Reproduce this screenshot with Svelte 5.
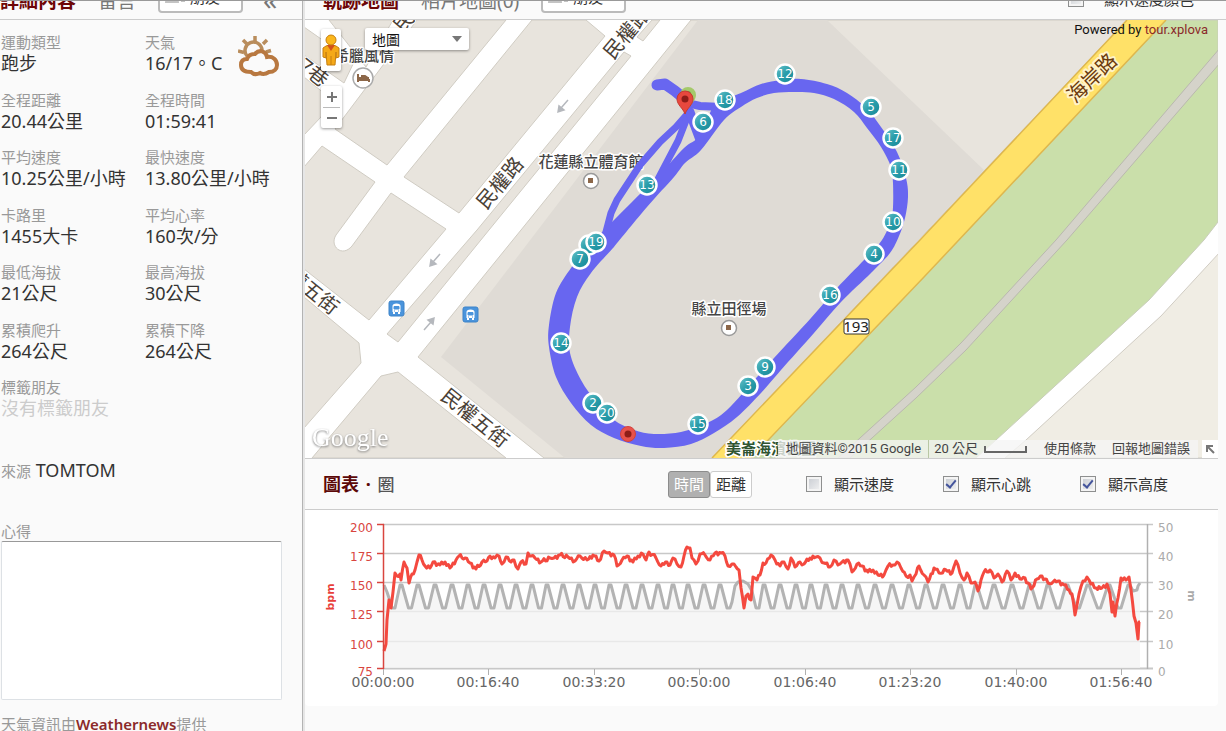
<script>
  const stats = [
    ['運動類型', '跑步'], ['天氣', '16/17。C'],
    ['全程距離', '20.44公里'], ['全程時間', '01:59:41'],
    ['平均速度', '10.25公里/小時'], ['最快速度', '13.80公里/小時'],
    ['卡路里', '1455大卡'], ['平均心率', '160次/分'],
    ['最低海拔', '21公尺'], ['最高海拔', '30公尺'],
    ['累積爬升', '264公尺'], ['累積下降', '264公尺'],
    ['標籤朋友', '沒有標籤朋友']
  ];

  const markers = [
    ['', 589, 245], ['12', 785, 74], ['5', 871, 107], ['17', 893, 138], ['11', 899, 170],
    ['10', 893, 222], ['4', 874, 254], ['16', 830, 295], ['9', 765, 367], ['3', 748, 386],
    ['15', 698, 424], ['2', 593, 403], ['20', 607, 413], ['14', 561, 343], ['19', 596, 242],
    ['7', 580, 259], ['13', 647, 185], ['6', 703, 122], ['18', 725, 100]
  ];

  const blocks = [
    '329,20 393,20 366,67',
    '304,27 354,62 344,83 304,55',
    '304,77 330,98 321,117 304,135',
    '417,20 506,20 387,165 335,129',
    '532,20 586,20 605,36 459,213 404,177',
    '304,297 359,343 361,363 304,428',
    '381,376 398,372 506,458 312,458',
    '387,334 477,230 624,52 631,56 489,230 398,342',
    '637,37 652,20 660,20 643,41',
    '691,20 1127,20 712,458 544,458 418,357 521,230'
  ];

  // Catmull-Rom spline through the given points, as a closed path.
  function smooth(text) {
    const p = text.split(' ').map((s) => s.split(',').map(Number));
    const at = (i) => p[Math.max(0, Math.min(p.length - 1, i))];
    let d = `M${p[0]}`;
    for (let i = 0; i < p.length - 1; i++) {
      const [a, b, c, e] = [at(i - 1), at(i), at(i + 1), at(i + 2)];
      d += `C${b[0] + (c[0] - a[0]) / 6},${b[1] + (c[1] - a[1]) / 6} ${c[0] - (e[0] - b[0]) / 6},${c[1] - (e[1] - b[1]) / 6} ${c}`;
    }
    return d + 'z';
  }
  const outer = smooth('714,103 741,93 761,84 781,80 801,79 827,84 847,93 866,108 881,127 897,152 906,178 908,197 905,218 899,236 890,253 871,273 841,302 814,333 781,370 761,393 737,417 714,433 691,444 664,448 641,446 614,438 591,425 571,403 556,377 549,347 549,325 556,293 571,268 581,257 590,245 614,220 641,193 661,173 684,148 700,135 714,103');
  const inner = smooth('614,247 647,207 674,177 685,163 701,150 724,120 741,107 757,98 774,93 794,92 814,93 834,99 854,112 867,128 881,147 891,167 893,183 893,207 891,220 882,240 864,260 837,288 811,318 774,358 757,377 727,410 707,423 681,432 654,434 634,430 614,420 597,403 581,380 570,353 570,327 577,297 591,273 614,247');

  const heart = [
    [384,651],[386,644],[387,620],[389,600],[391,608],[393,592],[395,573],[397,576],[400,574],[401,580],
    [404,562],[407,568],[409,583],[412,574],[415,570],[419,555],[422,560],[425,566],[430,568],[433,562],
    [440,565],[445,562],[450,568],[456,560],[459,556],[465,558],[470,563],[476,569],[482,562],[487,561],
    [490,556],[495,558],[499,556],[502,564],[506,557],[511,562],[514,560],[518,569],[521,562],[526,564],
    [528,553],[531,556],[535,558],[541,562],[550,558],[554,558],[560,555],[568,557],[575,561],[580,556],
    [587,560],[593,555],[599,561],[604,551],[608,553],[614,555],[617,566],[622,560],[627,556],[633,562],
    [638,556],[643,554],[646,560],[649,552],[656,558],[661,566],[667,562],[670,565],[673,558],[677,564],
    [681,567],[684,556],[687,547],[690,548],[692,558],[696,564],[700,554],[705,555],[710,560],[715,553],
    [721,553],[725,556],[728,566],[732,564],[736,567],[739,570],[741,588],[744,608],[746,596],[748,594],
    [751,600],[753,577],[757,580],[760,575],[763,563],[766,563],[771,555],[775,560],[780,566],[784,562],
    [788,569],[791,558],[795,567],[800,562],[804,564],[810,558],[816,557],[820,558],[824,563],[830,567],
    [834,560],[838,565],[842,562],[848,560],[852,572],[857,564],[862,566],[868,572],[873,570],[878,575],
    [884,575],[888,566],[893,565],[897,562],[901,568],[906,576],[910,575],[912,581],[916,574],[919,566],
    [924,575],[928,582],[934,568],[939,573],[946,570],[952,573],[956,561],[960,573],[964,580],[967,573],
    [971,583],[975,582],[978,591],[981,580],[984,572],[990,570],[994,578],[998,574],[1002,582],[1007,571],
    [1011,580],[1015,573],[1020,579],[1025,578],[1031,589],[1037,579],[1042,576],[1048,583],[1053,582],
    [1058,581],[1064,585],[1069,590],[1072,594],[1075,615],[1079,594],[1083,581],[1087,577],[1091,584],
    [1096,588],[1102,588],[1107,584],[1110,594],[1112,612],[1113,602],[1115,616],[1118,598],[1121,578],
    [1126,580],[1129,577],[1131,590],[1134,616],[1136,623],[1138,639],[1139,622],[1140,622]
  ];
  const jitter = [1.5, -1.5, 0.5, -1, 2, -0.5, -2, 1];
  let heartLine = '';
  let n = 0;
  heart.forEach(([x, y], i) => {
    heartLine += `${x},${y} `;
    const next = heart[i + 1];
    if (!next) return;
    const steps = Math.floor((next[0] - x) / 1.5);
    for (let k = 1; k < steps; k++) {
      const t = k / steps;
      heartLine += `${x + (next[0] - x) * t},${y + (next[1] - y) * t + jitter[n++ % 8]} `;
    }
  });

  const peaks = [
    [401,418,435,452,468,484,500,516,532,547,563,579,595,610,626,642,658,673,688,704,720],
    [764,780,796,811,826,842,858,875,892,909,926,943,960,976,994,1012,1030,1048,1067,1088,1109,1129]
  ];
  const wave = (list) => list.map((p, i) => {
    const top = `${p - 1},585 ${p + 1},585 `;
    const q = list[i + 1];
    if (!q) return top;
    const m = (p + q) / 2 + 1;
    return top + `${m - 2},608 ${m + 1},608 `;
  }).join('');
  const altitude = '384,585 387,592 389,598 392,608 395,608 ' + wave(peaks[0]) +
    '727,608 730,608 732,602 735,586 738,582 743,581 748,584 752,591 756,608 759,608 ' +
    wave(peaks[1]) + '1133,591 1137,590 1138,586 1140,583';

  const rows = [[524,'200','50'],[553,'175','40'],[582,'150','30'],[611,'125','20'],[641,'100','10'],[668,'75','0']];
  const times = [[383,'00:00:00'],[488,'00:16:40'],[594,'00:33:20'],[699,'00:50:00'],[805,'01:06:40'],[910,'01:23:20'],[1016,'01:40:00'],[1121,'01:56:40']];
  const arrows = [[563,106,0],[435,260,0],[429,324,180]];
</script>

{#snippet people()}
  <svg class="people" width="22" height="14" viewBox="0 0 22 14" aria-hidden="true">
    <path d="M1 14c0-3 1-4 4-5V5a3 3 0 0 1 6 0v4c3 1 4 2 4 5zM12 1a3 3 0 0 1 5 2v5c3 1 4 2 4 5h-4c0-3-2-4-4-5z" fill="#c4c4c4" />
  </svg>
{/snippet}

<div class="page">
  <aside>
    <header>
      <nav>
        <a class="tab on" href="#detail">詳細內容</a>
        <a class="tab" href="#comment">留言</a>
        <button class="friends">{@render people()}朋友</button>
        <button class="fold">«</button>
      </nav>
    </header>
    <div class="info">
      <dl>
        {#each stats as [name, value], i}
          <div class="stat" class:none={i === 12}>
            <dt>{name}</dt>
            <dd>{value}</dd>
            {#if i === 1}
              <svg class="weather" width="42" height="42" viewBox="0 0 42 42" fill="none" aria-hidden="true">
                <g stroke="#b98d5c" stroke-width="3.5">
                  <path d="M17 1v5M5 5l4 4M29 5l-4 4M0 16l6 1.500M28 17l5-1.500" />
                  <path d="M9 21a8.500 8.500 0 1 1 15-6" />
                </g>
                <path d="M9 24a8 8 0 0 1 8-5c4-5 11-3 12 3 6-1 10 3 10 8 0 4-3 7-8 7-3 2-6 3-9 1-4 2-7 1-9-1-6 0-10-2-10-7 0-4 2-6 6-6z" stroke="#b87840" stroke-width="4" />
              </svg>
            {/if}
          </div>
        {/each}
      </dl>
      <p class="source"><span>來源</span> TOMTOM</p>
      <label for="note">心得</label>
      <textarea id="note"></textarea>
      <p class="credit">天氣資訊由<a href="#weathernews">Weathernews</a>提供</p>
    </div>
  </aside>

  <main>
    <header>
      <nav>
        <a class="tab on" href="#track">軌跡地圖</a>
        <a class="tab" href="#photo">相片地圖(0)</a>
        <button class="friends">{@render people()}朋友</button>
        <label class="check end"><input type="checkbox" />顯示速度顏色</label>
      </nav>
    </header>

    <section class="map">
      <svg class="canvas" viewBox="305 20 913 438" preserveAspectRatio="xMidYMid slice">
        <defs>
          <linearGradient id="teal" x1="0" y1="0" x2="1" y2="1">
            <stop offset="0" stop-color="#6cc6cc" /><stop offset=".5" stop-color="#2a9daa" /><stop offset="1" stop-color="#158595" />
          </linearGradient>
        </defs>
        <rect x="305" y="20" width="913" height="438" fill="#fff" />
        <g fill="#e8e4dd" stroke="#d0ccc3">
          {#each blocks as points}<polygon {points} />{/each}
          <path d="M304 167L322 146L375 182L336 235C329 246 342 258 352 246L391 193L446 229L369 320L304 269z" />
        </g>
        <polygon points="441,357 698,20 827,20 984,170 712,458 565,458" fill="#dfdbd5" />
        <polygon points="1166,20 1218,20 1218,222 1204,240 1149,300 996,440 976,458 751,458" fill="#cadfaa" stroke="#c9cdbb" />
        <polygon points="1220,252 1161,316 1026,440 1005,458 1220,458" fill="#f0ede4" stroke="#d0ccc3" />
        <polygon points="1220,48 1056,240 961,343 916,387 838,458 850,458 916,398 966,350 1067,240 1220,63" fill="#d5d3ca" stroke="#b9b8ae" />
        <path d="M1127 20L920 240L712 458H751L924 277L1166 20z" fill="#ffe168" />
        <path d="M1127 20L920 240L712 458M751 458L924 277L1166 20" fill="none" stroke="#deb74e" stroke-width="1.500" />

        {#each arrows as [x, y, r]}
          <path transform="translate({x} {y}) rotate({r})" d="M5-6L-2 2M-5 6L-4 0L1 4z" fill="#b5b8bd" stroke="#b5b8bd" stroke-width="1.500" />
        {/each}
        {#each [[389, 301], [463, 307]] as [x, y]}
          <g transform="translate({x} {y})">
            <rect width="15" height="15" rx="2" fill="#4a94dc" stroke="#3c83c8" />
            <path d="M3.500 11V5q0-2.500 4-2.500t4 2.500v6zM4 11v2h2v-2m3 0v2h2v-2" fill="#fff" />
            <path d="M5 5.500h5v2.500H5zM5 10h1m3 0h1" fill="#4a94dc" stroke="#4a94dc" />
          </g>
        {/each}

        <g class="road">
          <text transform="translate(500 183) rotate(-50)" y="7">民權路</text>
          <text transform="translate(627 33) rotate(-50)" y="7">民權路</text>
          <text transform="translate(417 6) rotate(-50)" y="7">民權街</text>
          <text transform="translate(475 418) rotate(39)" y="7">民權五街</text>
          <text transform="translate(305 285) rotate(39)" y="7">民權五街</text>
          <text transform="translate(309 69) rotate(38)" y="7">17巷</text>
          <text class="coast" transform="translate(1092 78) rotate(-44)" y="7">海岸路</text>
        </g>

        <g class="place">
          <text x="364" y="61">希臘風情</text>
          <text x="591" y="167">花蓮縣立體育館</text>
          <text x="729" y="314">縣立田徑場</text>
          <text class="park" x="726" y="454">美崙海濱公園</text>
        </g>
        <circle cx="363" cy="78" r="10" fill="#fff" stroke="#aaa" stroke-width="1.500" />
        <path d="M358 74v8M358 80h11v2M359 78h9v2M361 76h4l3 2" fill="none" stroke="#8c6749" stroke-width="2" />
        {#each [[591, 181], [729, 328]] as [x, y]}
          <circle cx={x} cy={y} r="7.500" fill="#fff" stroke="#999" stroke-width="1.500" />
          <rect x={x - 3} y={y - 3} width="5" height="5" fill="#8c6749" />
        {/each}

        <path class="track" fill-rule="evenodd" d={outer + inner} />
        <g class="line">
          <path d="M606 232L611 213L617 200L640 165L660 142L676 127L690 111" stroke-width="7" />
          <path d="M658 179L669 158L678 141L687 118" stroke-width="7" />
          <path d="M690 112L694 124L700 140" stroke-width="9" />
          <path d="M657 85L665 84L675 91L687 101" stroke-width="11" />
          <path d="M687 103L700 106L722 107" stroke-width="8" />
        </g>

        <path d="M688 109c-2-5-8-8-8-14a8 8 0 0 1 16 0c0 6-6 9-8 14z" fill="#a5c96a" />
        <circle cx="688" cy="94" r="3" fill="#6d9440" />
        <path d="M685 114c-2-6-8-9-8-15a8 8 0 0 1 16 0c0 6-6 9-8 15z" fill="#e8483e" stroke="#c63b32" />
        <circle cx="685" cy="99" r="3.500" fill="#8e1d18" />
        <circle cx="628" cy="434" r="7.500" fill="#e8524b" stroke="#d5423d" />
        <circle cx="628" cy="434" r="3.500" fill="#8e1d18" />

        {#each markers as [name, x, y]}
          <circle cx={x} cy={y} r="9.500" fill="url(#teal)" stroke="#fff" stroke-width="2.500" />
          {#if name}<text class="km" {x} y={y + 4}>{name}</text>{/if}
        {/each}

        <rect x="844" y="319" width="25" height="15" rx="2" fill="#fff" stroke="#333" />
        <text class="route" x="856" y="332">193</text>
        <text class="google" x="312" y="446">Google</text>
      </svg>

      <button class="pegman" aria-label="街景">
        <svg width="18" height="34" viewBox="0 0 18 34">
          <path d="M4 13q5-3 10 0l3 2v9l-3 1v-6l-1 13H5L4 19v6l-3-1v-9z" fill="#f5a917" stroke="#c67f10" />
          <path d="M5 12h8l-4 6z" fill="#d2501d" /><path d="M9 23v9" stroke="#c67f10" />
          <circle cx="9" cy="7" r="5" fill="#fbb71c" stroke="#c67f10" />
        </svg>
      </button>
      <div class="zoom">
        <button aria-label="放大"><svg width="10" height="10"><path d="M5 0v10M0 5h10" stroke="#777" stroke-width="2" /></svg></button>
        <button aria-label="縮小"><svg width="10" height="10"><path d="M0 5h10" stroke="#777" stroke-width="2" /></svg></button>
      </div>
      <div class="type">
        <select aria-label="地圖類型"><option>地圖</option></select>
        <svg width="10" height="6" aria-hidden="true"><path d="M0 0h10L5 6z" fill="#777" /></svg>
      </div>
      <p class="powered">Powered by <a href="#xplova">tour.xplova</a></p>
      <div class="legal">
        <span class="seg">地圖資料©2015 Google</span>
        <span class="seg scale">20 公尺 <i></i></span>
        <a class="seg" href="#terms">使用條款</a>
        <a class="seg" href="#report">回報地圖錯誤</a>
        <button class="corner" aria-label="總覽地圖"><svg width="9" height="9" fill="none" stroke="#777" stroke-width="2"><path d="M1 7V1h6M1 1l7 7" /></svg></button>
      </div>
    </section>

    <div class="bar">
      <h2>圖表 <span>·</span> <a href="#laps">圈</a></h2>
      <div class="toggle"><button class="on">時間</button><button>距離</button></div>
      <label class="check"><input type="checkbox" />顯示速度</label>
      <label class="check"><input type="checkbox" checked />顯示心跳</label>
      <label class="check"><input type="checkbox" checked />顯示高度</label>
    </div>

    <section class="chart">
      <svg viewBox="305 510 913 196">
        {#each rows as [y]}
          <path d="M383 {y + .5}H1153" stroke="#c8c8c8" stroke-width={y === 668 ? 2 : 1.5} />
        {/each}
        <polygon points="384,668 {altitude} 1140,668" fill="#f3f3f3" fill-opacity=".75" />
        <path d="M1147.500 524V669" stroke="#b0b0b0" stroke-width="1.500" />
        <polyline class="alt" points={altitude} />
        <polyline class="hr" points={heartLine} />
        <path d="M383.500 524V669" stroke="#d9453f" stroke-width="1.500" />
        {#each rows as [y, left, right]}
          <path d="M377 {y + .5}H384" stroke="#d9453f" stroke-width="1.500" />
          <text class="left" x="373" y={y + 8}>{left}</text>
          <text class="right" x="1158" y={y + 8}>{right}</text>
        {/each}
        {#each times as [x, name]}
          <path d="M{x + .5} 669v6" stroke="#b0b0b0" />
          <text class="time" {x} y="687">{name}</text>
        {/each}
        <text class="unit" transform="translate(334 597) rotate(-90)" fill="#e8413b">bpm</text>
        <text class="unit" transform="translate(1188 596) rotate(90)" fill="#aaa">m</text>
      </svg>
    </section>
  </main>
</div>

<style>
  :global(body) { margin: 0; overflow: hidden; background: #fafafa; }
  .page {
    box-sizing: border-box; height: 100vh; overflow: hidden; display: grid;
    grid-template-columns: 303px 1fr; border-top: 1px solid #999; background: #fafafa; color: #333;
    font: 15px/20px "Noto Sans", "Noto Sans CJK TC", sans-serif;
  }
  p, h2, dl, dd { margin: 0; }
  a { color: #8b2a2a; text-decoration: none; }
  button { font: inherit; color: inherit; cursor: pointer; }
  aside { border-right: 1px solid #b3b3b3; }
  main { border-left: 2px solid #e6e6e6; min-width: 0; }

  header { height: 18px; overflow: hidden; display: flex; align-items: flex-end; border-bottom: 1px solid #ccc; }
  nav { flex: 1; display: flex; align-items: flex-end; height: 26px; padding-bottom: 6px; }
  .tab { font-size: 19px; line-height: 24px; color: #777; margin-right: 22px; }
  .tab.on { color: #6d0606; font-weight: bold; }
  main nav { padding-left: 18px; padding-right: 32px; }
  .friends {
    box-sizing: border-box; width: 85px; height: 30px; padding: 0 0 4px 4px; border: 2px solid #bbb;
    border-radius: 4px; background: #fff; display: flex; align-items: flex-end; gap: 4px; line-height: 20px;
  }
  .people { margin-bottom: 4px; }
  .fold { border: 0; background: none; padding: 0; margin: 0 0 2px 20px; font-size: 28px; line-height: 24px; color: #777; }

  .info { padding: 12px 20px 0 1px; }
  dl { min-height: 387px; display: grid; grid-template-columns: 144px 1fr; align-content: space-between; }
  .stat { position: relative; white-space: nowrap; }
  dt, .info label, .source span, .credit { font-size: 15px; line-height: 20px; color: #999; }
  dd { font-size: 18px; line-height: 22px; }
  .none dd { color: #ccc; }
  .weather { position: absolute; left: 93px; top: 3px; }
  .source { margin-top: 39px; font-size: 18px; line-height: 24px; }
  .info label { display: block; margin-top: 39px; }
  textarea {
    display: block; box-sizing: border-box; width: 100%; height: 159px; resize: none; background: #fff;
    border: 1px solid #dde1e5; border-top-color: #999; border-radius: 2px;
  }
  .credit { margin-top: 14px; }
  .credit a { font-weight: 600; }

  .check { display: flex; align-items: center; gap: 12px; white-space: nowrap; line-height: 24px; }
  .check input {
    appearance: none; box-sizing: border-box; width: 16px; height: 16px; margin: 0; border: 1px solid #8e8f8f;
    background: linear-gradient(135deg, #c6cad0, #f4f4f4); box-shadow: inset 0 0 0 2px #f4f4f4;
  }
  .check input:checked::after {
    content: ""; display: block; width: 4px; height: 8px; margin: 1px 0 0 4px;
    border: solid #44549c; border-width: 0 2px 2px 0; transform: rotate(40deg);
  }
  .end { margin-left: auto; gap: 20px; margin-bottom: 2px; }

  .map { position: relative; margin-right: 8px; border-bottom: 1px solid #ccc; }
  .canvas { display: block; width: 100%; aspect-ratio: 913 / 438; }
  .canvas text { text-anchor: middle; paint-order: stroke; stroke: #fff; stroke-linejoin: round; }
  .road text { font-size: 20px; fill: #4a4136; stroke-width: 2px; }
  .road .coast { fill: #6b3a0c; stroke: #fff3c8; stroke-width: 4px; }
  .place text { font-size: 15px; fill: #444; stroke-width: 3px; font-weight: 500; }
  .place .park { fill: #2f5430; text-anchor: start; font-weight: bold; }
  .track { fill: #6866f0; }
  .line { fill: none; stroke: #6866f0; stroke-linecap: round; stroke-linejoin: round; }
  .canvas .km { font: 12px "DejaVu Sans", sans-serif; fill: #fff; stroke: none; }
  .canvas .route { font-size: 15px; fill: #222; stroke: none; }
  .canvas .google {
    font: 26px "Liberation Serif", serif; fill: #fff; stroke: none; text-anchor: start;
    filter: drop-shadow(0 1px 1px #777);
  }
  .pegman, .zoom, .type { position: absolute; background: #fff; border: 0; border-radius: 2px; box-shadow: 0 1px 3px rgb(0 0 0 / 40%); }
  .pegman { left: 16px; top: 9px; width: 20px; height: 42px; padding: 4px 1px; }
  .zoom { left: 16px; top: 66px; width: 21px; display: flex; flex-direction: column; align-items: center; }
  .zoom button { display: grid; place-items: center; width: 17px; height: 21px; padding: 0; border: 0; background: none; }
  .zoom button + button { border-top: 1px solid #bbb; }
  .type { left: 60px; top: 8px; width: 104px; height: 22px; display: flex; align-items: center; }
  .type select { appearance: none; flex: 1; border: 0; background: none; padding: 0 7px; font: 14px/22px "Noto Sans CJK TC", sans-serif; color: #111; }
  .type svg { position: absolute; right: 7px; }
  .powered { position: absolute; right: 10px; top: 0; font: 13px/20px Roboto, sans-serif; color: #111; }
  .legal { position: absolute; right: 0; bottom: 0; display: flex; height: 18px; font: 13px/18px Roboto, "Noto Sans CJK TC", sans-serif; color: #444; white-space: nowrap; }
  .seg { padding: 0 7px; background: rgb(245 245 245 / 78%); color: #444; }
  .scale { border-left: 1px solid #b9c7a4; display: flex; align-items: center; gap: 6px; padding: 0 9px 0 5px; }
  a.seg { padding: 0 8px; }
  .scale i { width: 39px; height: 5px; border: solid #666; border-width: 0 2px 2px; }
  .corner { margin-left: 4px; width: 16px; padding: 0; border: 0; background: #fff; display: grid; place-items: center; }

  .bar { height: 50px; margin-right: 8px; padding-right: 50px; display: flex; align-items: center; border-bottom: 1px solid #ccc; }
  .bar h2 { flex: 1; padding-left: 18px; font-size: 18px; line-height: 24px; color: #5c0808; }
  .bar h2 span { margin: 0 2px; }
  .bar h2 a { font-size: 17px; font-weight: 500; color: #555; }
  .toggle { display: flex; margin-right: 5px; }
  .toggle button { box-sizing: border-box; height: 27px; width: 42px; padding: 0; border: 1px solid #ccc; border-radius: 3px; background: #fff; line-height: 20px; }
  .toggle .on { background: #b0b0b0; border-color: #8c8c8c; color: #fff; }
  .bar .check { margin-left: 49px; }

  .chart { margin-right: 8px; background: #fff; border-radius: 0 0 4px 4px; }
  .chart svg { display: block; width: 100%; }
  .chart text { font: 12px "DejaVu Sans", sans-serif; }
  .chart .left { fill: #d9453f; text-anchor: end; }
  .chart .right { fill: #aaa; }
  .chart .time { font-size: 14px; fill: #666; text-anchor: middle; }
  .chart .unit { font-size: 11px; font-weight: bold; text-anchor: middle; }
  .alt { fill: none; stroke: #b3b3b3; stroke-width: 3; stroke-linejoin: round; }
  .hr { fill: none; stroke: #f4493f; stroke-width: 3; stroke-linejoin: round; }
</style>
